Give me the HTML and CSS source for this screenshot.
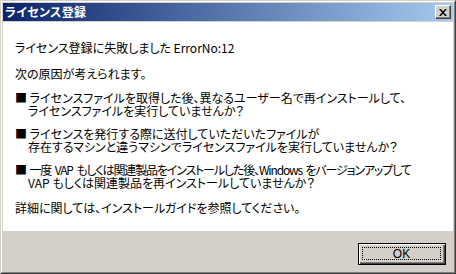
FILE: index.html
```html
<!DOCTYPE html>
<html lang="ja">
<head>
<meta charset="utf-8">
<title>ライセンス登録</title>
<link rel="stylesheet" href="styles.css">
</head>
<body>
<div class="window">
  <div class="frame">
    <div class="titlebar">
      <span class="title">ライセンス登録</span>
      <button class="close" aria-label="閉じる">
        <svg width="8" height="7" viewBox="0 0 8 7"><path d="M0 0h2l2 2.5L6 0h2L5 3.5 8 7H6L4 4.5 2 7H0l3-3.5z" fill="#000"/></svg>
      </button>
    </div>
    <div class="content">
      <p class="line first">ライセンス登録に失敗しました ErrorNo:12</p>
      <p class="line cause">次の原因が考えられます。</p>
      <div class="item">
        <p class="line">■ ライセンスファイルを取得した後、異なるユーザー名で再インストールして、</p>
        <p class="line cont">ライセンスファイルを実行していませんか？</p>
      </div>
      <div class="item">
        <p class="line">■ ライセンスを発行する際に送付していただいたファイルが</p>
        <p class="line cont">存在するマシンと違うマシンでライセンスファイルを実行していませんか？</p>
      </div>
      <div class="item">
        <p class="line narrow">■ 一度 VAP もしくは関連製品をインストールした後、Windows をバージョンアップして</p>
        <p class="line cont">VAP もしくは関連製品を再インストールしていませんか？</p>
      </div>
      <p class="line detail">詳細に関しては、インストールガイドを参照してください。</p>
    </div>
    <div class="footer">
      <button class="ok"><span class="focus">OK</span></button>
    </div>
  </div>
</div>
</body>
</html>
```

FILE: styles.css
```css
* { box-sizing: border-box; }
html, body { margin: 0; padding: 0; }
body {
  width: 456px;
  height: 274px;
  background: #d4d0c8;
  font-family: "Noto Sans CJK JP", "Noto Sans", sans-serif;
  font-size: 12px;
  color: #000;
  overflow: hidden;
}
.window {
  width: 456px;
  height: 274px;
  border: 1px solid;
  border-color: #d4d0c8 #404040 #404040 #d4d0c8;
}
.frame {
  height: 100%;
  border: 1px solid;
  border-color: #ffffff #808080 #808080 #ffffff;
  padding: 1px;
  background: #d4d0c8;
  display: flex;
  flex-direction: column;
}
.titlebar {
  height: 18px;
  flex: none;
  background: linear-gradient(to right, #0a246a, #a6caf0);
  display: flex;
  align-items: center;
  justify-content: space-between;
  padding: 0 2px 0 2px;
  margin-bottom: 1px;
}
.title {
  color: #fff;
  font-weight: bold;
  font-size: 12px;
  line-height: 18px;
  font-feature-settings: "palt";
  letter-spacing: 0.3px;
}
.close {
  width: 16px;
  height: 14px;
  padding: 0;
  margin: 0;
  background: #d4d0c8;
  border: 1px solid;
  border-color: #ffffff #404040 #404040 #ffffff;
  box-shadow: inset -1px -1px 0 #808080;
  display: flex;
  align-items: center;
  justify-content: center;
}
.close svg { display: block; margin-left: -1px; }
.content {
  flex: 1;
  background: #fff;
  padding: 19px 0 0 12px;
  font-feature-settings: "palt";
}
.line {
  margin: 0;
  line-height: 13px;
  white-space: nowrap;
}
.narrow { letter-spacing: -1.15px; word-spacing: 2px; }
.first { margin-bottom: 13px; }
.cause { margin-bottom: 11px; }
.item { margin-bottom: 10px; }
.item:last-of-type { margin-bottom: 12px; }
.cont { padding-left: 13px; }
.footer {
  height: 40px;
  flex: none;
  display: flex;
  justify-content: flex-end;
  align-items: flex-start;
  padding: 12px 7px 0 0;
}
.ok {
  width: 88px;
  height: 22px;
  padding: 0;
  margin: 0;
  background: #d4d0c8;
  border: 1px solid #000;
  box-shadow: inset 1px 1px 0 #ffffff, inset -1px -1px 0 #404040, inset -2px -2px 0 #808080;
  font-family: "Liberation Sans", "Noto Sans", sans-serif;
  font-size: 12px;
  color: #000;
  display: flex;
  align-items: stretch;
  justify-content: stretch;
}
.focus {
  flex: 1;
  margin: 3px 4px 4px 3px;
  border: 1px dotted #000;
  display: flex;
  align-items: center;
  justify-content: center;
  line-height: 12px;
}
```
